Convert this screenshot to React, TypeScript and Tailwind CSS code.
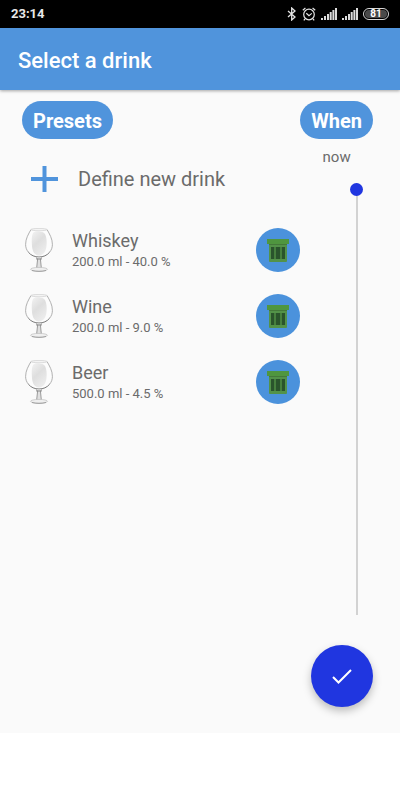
import React, { useState } from 'react';

const initialDrinks = [
  { id: 1, name: 'Whiskey', details: '200.0 ml - 40.0 %' },
  { id: 2, name: 'Wine', details: '200.0 ml - 9.0 %' },
  { id: 3, name: 'Beer', details: '500.0 ml - 4.5 %' },
];

const Signal = () => (
  <svg width="16" height="12" viewBox="0 0 16 12" fill="#dcdcdc">
    <rect x="0" y="10" width="2" height="2" />
    <rect x="3" y="8" width="2" height="4" />
    <rect x="6" y="6" width="2" height="6" />
    <rect x="8.700" y="4" width="2" height="8" />
    <rect x="11.400" y="2" width="2" height="10" />
    <rect x="14" y="0" width="2" height="12" />
  </svg>
);

const StatusBar = () => (
  <div className="flex h-7 shrink-0 items-center justify-between bg-black pr-[11px] pl-[11px] text-[#e8e8e8]">
    <span className="text-[13px] leading-4 font-bold">23:14</span>
    <div className="flex items-center gap-[5px]">
      <svg width="10" height="14" viewBox="0 0 10 14" fill="none" stroke="#e4e4e4" strokeWidth="1.3">
        <path d="M1 4l7 6-3.300 3V1L8 4l-7 6" />
      </svg>
      <svg width="14" height="14" viewBox="0 0 14 14" fill="none" stroke="#e4e4e4" strokeWidth="1.2">
        <circle cx="7" cy="7.500" r="5.300" />
        <path d="M4.300 6.200L7 8.600l2.800-2.200M.8 3.200L3.400 1M13.200 3.200L10.600 1M3 12l-1.200 1.400M11 12l1.200 1.400" />
      </svg>
      <Signal />
      <Signal />
      <div className="flex h-3 w-[26px] items-center justify-center rounded-full border border-[#d8d8d8] p-px">
        <span className="flex h-2 w-full items-center justify-center rounded-full bg-[#4a4a4a] text-[10px] leading-none font-bold text-white">
          81
        </span>
      </div>
    </div>
  </div>
);

const Glass = () => (
  <svg width="28" height="44" viewBox="0 0 28 44" fill="none" className="shrink-0">
    <defs>
      <linearGradient id="glassShade" x1="0" y1="0" x2="0.6" y2="1">
        <stop offset="0" stopColor="#f2f2f2" />
        <stop offset="0.5" stopColor="#dedede" />
        <stop offset="1" stopColor="#ececec" />
      </linearGradient>
    </defs>
    <path d="M6 1.500C3.500 6 .6 10.500 .6 16.500 .6 24 7 29 14 29s13.400-5 13.400-12.500C27.400 10.500 24.500 6 22 1.500z" fill="#fcfcfc" />
    <path d="M8 5c2-2 10-2 12 1 1.500 3 2 7 1.500 12-.6 6-3.500 9.500-7.500 9.500S7.500 24 7 18C6.500 13 6.500 8 8 5z" fill="url(#glassShade)" />
    <path d="M6 1.500C3.500 6 .6 10.500 .6 16.500c0 3 1 5.500 2.700 7.600M22 1.500c2.500 4.500 5.400 9 5.400 15 0 3-1 5.500-2.700 7.600" stroke="#9c9c9c" strokeWidth="0.8" />
    <path d="M3.300 24.100C6 27.500 9.800 29 14 29s8-1.500 10.700-4.900" stroke="#6a6a6a" strokeWidth="0.9" />
    <ellipse cx="14" cy="1.600" rx="8" ry="1.200" fill="#f4f4f4" stroke="#c8c8c8" strokeWidth="0.6" />
    <path d="M11.500 29.500h5l-1 3 .8 7.500h-4.600l.8-7.500z" fill="#e0e0e0" />
    <path d="M11.500 29.500l1 2.500-.8 7.500M16.500 29.500l-1 2.500.8 7.500" stroke="#858585" strokeWidth="0.8" />
    <path d="M11.500 31h5" stroke="#777" strokeWidth="0.8" />
    <ellipse cx="14" cy="41.300" rx="8.500" ry="1.900" fill="#efefef" stroke="#b5b5b5" strokeWidth="0.6" />
    <path d="M7 42.500c4 1.200 10 1.200 14 0" stroke="#888" strokeWidth="0.7" />
  </svg>
);

const Bin = () => (
  <svg width="22" height="24" viewBox="0 0 22 24">
    <path d="M2 5h18v18a1 1 0 0 1-1 1H3a1 1 0 0 1-1-1z" fill="#539249" />
    <path d="M2 6h18v1H2z" fill="#44793a" />
    <rect x="0" y="1" width="22" height="5" fill="#4f963f" />
    <path d="M4 9h14v12H4z" fill="#467f3e" />
    <path d="M4 9h3v12H4zM9 9h4v12H9zM15 9h3v12h-3z" fill="#2a542c" />
  </svg>
);

const App = () => {
  const [drinks, setDrinks] = useState(initialDrinks);
  const [when, setWhen] = useState(0);

  return (
    <div className="flex h-screen flex-col bg-white font-['Roboto',sans-serif] text-[#6b6b6b]">
      <StatusBar />
      <header className="z-10 flex h-[62px] shrink-0 items-center bg-[#5094dc] px-[18px] pt-1 shadow-[0_1px_3px_rgba(0,0,0,0.35)]">
        <h1 className="text-[22px] leading-7 font-medium text-white">Select a drink</h1>
      </header>

      <main className="flex min-h-0 flex-1 bg-[#fafafa] pt-[11px] pr-[27px] pb-[26px] pl-[22px]">
        <section className="flex-1">
          <h2 className="flex h-[38px] w-fit items-center rounded-full bg-[#5094dc] px-[11px] pt-[2px] text-[20px] font-bold text-white">
            Presets
          </h2>
          <button className="mt-5 flex h-10 items-center gap-5 pl-[9px] text-[20px]">
            <svg width="27" height="26" viewBox="0 0 27 26" stroke="#5094dc" strokeWidth="4">
              <path d="M13.500 0v26M0 13h27" />
            </svg>
            Define new drink
          </button>
          <ul className="mt-[18px]">
            {drinks.map((drink) => (
              <li key={drink.id} className="flex h-[66px] items-center pl-[3px]">
                <Glass />
                <div className="ml-[19px] flex-1 pt-px">
                  <p className="text-[18px] leading-[22px]">{drink.name}</p>
                  <p className="text-[13px] leading-5">{drink.details}</p>
                </div>
                <button
                  aria-label={`Delete ${drink.name}`}
                  className="flex size-11 items-center justify-center rounded-full bg-[#4b92dc]"
                  onClick={() => setDrinks(drinks.filter((d) => d.id !== drink.id))}
                >
                  <Bin />
                </button>
              </li>
            ))}
          </ul>
        </section>

        <section className="flex flex-col items-center">
          <h2 className="flex h-[38px] items-center rounded-full bg-[#5094dc] px-[11px] pt-[2px] text-[20px] font-bold text-white">
            When
          </h2>
          <label htmlFor="when" className="mt-2 text-[15px] leading-5">
            {when === 0 ? 'now' : `${when} min ago`}
          </label>
          <input
            id="when"
            type="range"
            min={0}
            max={240}
            value={when}
            onChange={(e) => setWhen(Number(e.target.value))}
            className="mt-4 mr-[10px] min-h-0 w-[13px] flex-1 appearance-none self-end bg-[linear-gradient(#d2d2d2,#d2d2d2)] bg-[length:2px_100%] bg-center bg-no-repeat [writing-mode:vertical-lr] [&::-webkit-slider-thumb]:size-[13px] [&::-webkit-slider-thumb]:appearance-none [&::-webkit-slider-thumb]:rounded-full [&::-webkit-slider-thumb]:bg-[#2036e0]"
          />
          <button
            aria-label="Confirm"
            className="mt-[30px] flex size-[62px] shrink-0 items-center justify-center self-end rounded-full bg-[#2036e0] shadow-[0_4px_9px_rgba(0,0,0,0.25)]"
          >
            <svg width="20" height="15" viewBox="0 0 20 15" fill="none" stroke="white" strokeWidth="2">
              <path d="M1 8l5.500 5.500L19 1" />
            </svg>
          </button>
        </section>
      </main>
      <div className="h-[67px] shrink-0 bg-white" />
    </div>
  );
};

export default App;
